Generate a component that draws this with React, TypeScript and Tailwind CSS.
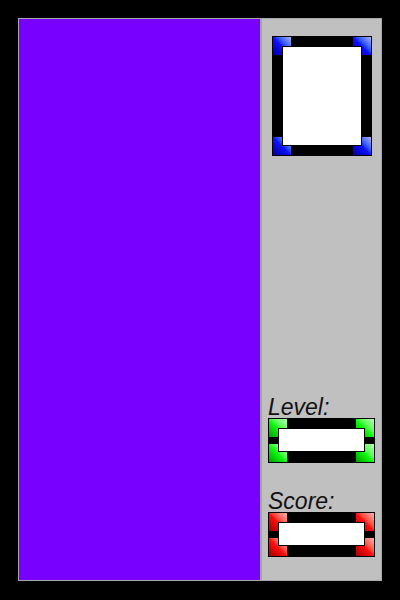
type Tone = "blue" | "green" | "red";

const corner: Record<Tone, string> = {
  blue: "bg-gradient-to-bl from-[#b0b0ff] via-[#1010ff] to-[#0000a0]",
  green: "bg-gradient-to-bl from-[#b0ffb0] via-[#10ff10] to-[#00a000]",
  red: "bg-gradient-to-bl from-[#ffb0b0] via-[#ff1010] to-[#a00000]",
};

function Frame({ tone, w, h, inner }: { tone: Tone; w: string; h: string; inner: string }) {
  const c = `absolute h-[18px] w-[18px] ${corner[tone]}`;
  return (
    <div className={`relative border border-black bg-black ${w} ${h}`}>
      <div className={`${c} left-0 top-0`} />
      <div className={`${c} right-0 top-0`} />
      <div className={`${c} bottom-0 left-0`} />
      <div className={`${c} bottom-0 right-0`} />
      <div className={`relative z-10 border border-black bg-white ${inner}`} />
    </div>
  );
}

export default function App() {
  return (
    <div className="h-[600px] w-[400px] bg-black pl-[18px] pt-[18px] font-['Liberation_Sans',Arial,sans-serif]">
      <div className="flex h-[563px] w-[364px] border border-[#a8a8a8]">
        {/* playfield */}
        <div className="w-[241px] bg-[#7700ff]" />
        <div className="flex flex-1 flex-col border-l-2 border-[#a4a4a4] bg-[#c0c0c0]">
          <div className="ml-[10px] mt-[17px]">
            <Frame tone="blue" w="w-[100px]" h="h-[120px]" inner="ml-[9px] mt-[9px] h-[100px] w-[80px]" />
          </div>

          <div className="ml-[6px] mt-auto">
            <div className="text-[23px] italic leading-[20px] text-[#111]">Level:</div>
            <div className="mt-px">
              <Frame tone="green" w="w-[107px]" h="h-[45px]" inner="ml-[9px] mt-[9px] h-[24px] w-[87px]" />
            </div>
          </div>

          <div className="mb-[23px] ml-[6px] mt-[28px]">
            <div className="text-[23px] italic leading-[20px] text-[#111]">Score:</div>
            <div className="mt-px">
              <Frame tone="red" w="w-[107px]" h="h-[45px]" inner="ml-[9px] mt-[9px] h-[24px] w-[87px]" />
            </div>
          </div>
        </div>
      </div>
    </div>
  );
}
